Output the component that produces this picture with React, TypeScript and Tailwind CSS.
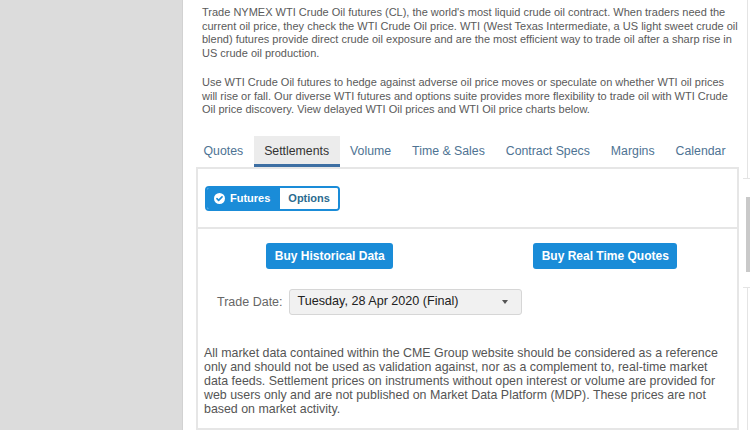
import React from "react";

const tabs = ["Quotes", "Settlements", "Volume", "Time & Sales", "Contract Specs", "Margins", "Calendar"];

const CheckCircle = () => (
  <svg width="11" height="11" viewBox="0 0 16 16" className="shrink-0">
    <circle cx="8" cy="8" r="8" fill="#ffffff" />
    <path d="M4.3 8.3l2.4 2.4 5-5" fill="none" stroke="#1a8cd8" strokeWidth="2.4" strokeLinecap="round" strokeLinejoin="round" />
  </svg>
);

const App = () => {
  return (
    <div className="flex w-[750px] h-[430px] overflow-hidden bg-white font-['Liberation_Sans',Arial,sans-serif]">
      <aside className="w-[183px] shrink-0 h-full bg-[#dcdcdc] border-r border-[#d2d2d2]" />

      <main className="w-[556px] shrink-0 pl-[13px] flex flex-col">
        <div className="pl-[6px] pt-[6px] text-[11px] leading-[13.7px] text-[#5a5a5a]">
          <p className="mb-[15px]">
            Trade NYMEX WTI Crude Oil futures (CL), the world's most liquid crude oil contract. When traders need the
            current oil price, they check the WTI Crude Oil price. WTI (West Texas Intermediate, a US light sweet crude oil
            blend) futures provide direct crude oil exposure and are the most efficient way to trade oil after a sharp rise in
            US crude oil production.
          </p>
          <p>
            Use WTI Crude Oil futures to hedge against adverse oil price moves or speculate on whether WTI oil prices
            will rise or fall. Our diverse WTI futures and options suite provides more flexibility to trade oil with WTI Crude
            Oil price discovery. View delayed WTI Oil prices and WTI Oil price charts below.
          </p>
        </div>

        <ul className="flex mt-[19px] -ml-[3px] text-[12.3px]">
          {tabs.map((t) =>
            t === "Settlements" ? (
              <li key={t} className="h-[31px] px-[10.5px] flex items-center bg-[#ececec] text-[#333] border-b-[3px] border-[#3d6fa3] pt-[3px]">
                {t}
              </li>
            ) : (
              <li key={t} className="h-[31px] px-[10.5px] flex items-center text-[#4e7393]">
                {t}
              </li>
            )
          )}
        </ul>

        <section className="border-2 border-[#e6e6e6] flex-1">
          <div className="pl-[7px] pt-[17px] pb-[16px]">
            <div className="inline-flex h-[25px] rounded-[4px] border-2 border-[#1a8cd8] overflow-hidden text-[11px] font-bold">
              <span className="flex items-center gap-[5px] bg-[#1a8cd8] text-white pl-[7px] pr-[10px]">
                <CheckCircle />
                Futures
              </span>
              <span className="flex items-center bg-white text-[#2b6b8f] pl-[8px] pr-[8px]">Options</span>
            </div>
          </div>

          <div className="border-t-2 border-[#e6e6e6]">
            <div className="grid grid-cols-2 pt-[14px]">
              <div className="flex justify-center pr-[6px]">
                <button className="h-[26px] px-[8.5px] rounded-[3px] bg-[#1a8cd8] text-white text-[12px] font-bold">
                  Buy Historical Data
                </button>
              </div>
              <div className="flex justify-center pl-[6px]">
                <button className="h-[26px] px-[8.5px] rounded-[3px] bg-[#1a8cd8] text-white text-[12px] font-bold">
                  Buy Real Time Quotes
                </button>
              </div>
            </div>

            <div className="flex items-center gap-[6px] pl-[19px] mt-[20px]">
              <span className="text-[12.5px] text-[#666]">Trade Date:</span>
              <div className="w-[233px] h-[26px] flex items-center justify-between pl-[8px] pr-[13px] bg-[#f1f1f1] border border-[#d6d6d6] rounded-[3px] text-[12.6px] text-[#222]">
                <span>Tuesday, 28 Apr 2020 (Final)</span>
                <span className="w-0 h-0 border-l-[3.5px] border-r-[3.5px] border-t-[4px] border-l-transparent border-r-transparent border-t-[#555]" />
              </div>
            </div>

            <p className="pl-[6px] pr-[10px] mt-[31px] text-[12.4px] leading-[14px] text-[#555]">
              All market data contained within the CME Group website should be considered as a reference only and should not
              be used as validation against, nor as a complement to, real-time market data feeds. Settlement prices on
              instruments without open interest or volume are provided for web users only and are not published on Market Data
              Platform (MDP). These prices are not based on market activity.
            </p>
          </div>
        </section>
      </main>

      <div className="flex-1 flex flex-col pl-[4px]">
        <div className="h-[179px] border-b border-[#e4e4e4] pl-[4px]">
          <div className="h-full border-l border-[#e4e4e4]" />
        </div>
        <div className="h-[75px] mt-[18px] ml-[3px] bg-[#c9c9c9]" />
        <div className="flex-1 mt-[15px] border-t border-[#e4e4e4] pl-[4px]">
          <div className="h-full border-l border-[#e4e4e4]" />
        </div>
      </div>
    </div>
  );
};

export default App;
